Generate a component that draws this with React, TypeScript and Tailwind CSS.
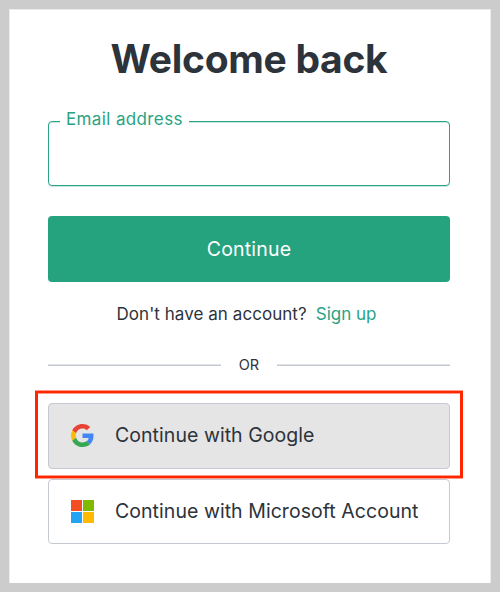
import { useState } from 'react';
import type { ReactNode } from 'react';

export default function App() {
  const [email, setEmail] = useState('');

  return (
    <div className="h-[592px] w-[500px] overflow-hidden bg-[#cccccc] p-[9px] font-['Inter',sans-serif] text-[#2d333a]">
      <main className="flex h-[574px] w-[482px] flex-col border-x border-t border-[#ececec] bg-white pt-[27px] pr-[40px] pl-[38px]">
        <h1 className="h-[44px] text-center text-[39px] leading-[44px] font-bold tracking-[-0.3px] whitespace-nowrap">
          Welcome back
        </h1>

        <div className="relative mt-[40px] h-[65px]">
          <input
            id="email"
            type="email"
            value={email}
            onChange={(e) => setEmail(e.target.value)}
            className="h-full w-full rounded-[4px] border border-[#29a383] px-4 text-lg shadow-[inset_0_1px_0_#c9e9df,0_1px_0_#c9e9df] outline-none"
          />
          <label
            htmlFor="email"
            className="absolute -top-[14px] left-[12px] bg-white pr-[6px] pl-[6px] text-[17px] leading-[24px] tracking-[0.37px] whitespace-nowrap text-[#29a383]"
          >
            Email address
          </label>
        </div>

        <button className="mt-[30px] h-[66px] shrink-0 rounded-[4px] bg-[#24a37e] pt-px text-[19.5px] tracking-[0.2px] text-white">
          Continue
        </button>

        <p className="mt-[20px] flex h-[24px] justify-center gap-[9px] pr-[5px] text-[17px] leading-[24px] whitespace-nowrap">
          <span className="tracking-[0.05px]">Don't have an account?</span>
          <a href="#" className="text-[#29a383]">
            Sign up
          </a>
        </p>

        <div className="mt-[29px] flex h-[20px] items-center">
          <span className="h-[2px] w-[173px] border-t border-[#dfe3e7] bg-[#c5c8d0]" />
          <span className="flex-1 text-center text-[14.5px] leading-[20px]">OR</span>
          <span className="h-[2px] w-[173px] border-t border-[#dfe3e7] bg-[#c5c8d0]" />
        </div>

        <div className="mt-[28px] flex flex-col gap-[10px]">
          <div className="relative">
            <ProviderButton label="Continue with Google" icon={<GoogleLogo />} highlighted />
            <span className="pointer-events-none absolute -inset-x-[13px] -top-[12px] -bottom-[9px] border-x-[3px] border-y-2 border-[#ff2600] shadow-[0_1px_0_#ff9a87,0_-1px_0_#ff9a87,inset_0_1px_0_#ff9a87,inset_0_-1px_0_#ff9a87]" />
          </div>
          <ProviderButton label="Continue with Microsoft Account" icon={<MicrosoftLogo />} />
        </div>
      </main>
    </div>
  );
}

function ProviderButton({ label, icon, highlighted }: { label: string; icon: ReactNode; highlighted?: boolean }) {
  return (
    <button
      className={`flex w-full items-center gap-[21px] rounded-[4px] border border-[#c5c9d0] pl-[22px] text-[19.5px] tracking-[0.05px] whitespace-nowrap ${
        highlighted ? 'h-[66px] bg-[#e5e5e5] pb-px' : 'h-[65px] bg-white'
      }`}
    >
      {icon}
      <span className="pt-px">{label}</span>
    </button>
  );
}

function GoogleLogo() {
  return (
    <svg width="23" height="23" viewBox="0 0 48 48">
      <path
        fill="#EA4335"
        d="M24 9.5c3.54 0 6.71 1.22 9.21 3.6l6.85-6.85C35.9 2.38 30.47 0 24 0 14.62 0 6.51 5.38 2.56 13.22l7.98 6.19C12.43 13.72 17.74 9.5 24 9.5z"
      />
      <path
        fill="#4285F4"
        d="M46.98 24.55c0-1.57-.15-3.09-.38-4.55H24v9.02h12.94c-.58 2.96-2.26 5.48-4.78 7.18l7.73 6c4.51-4.18 7.09-10.36 7.09-17.65z"
      />
      <path
        fill="#FBBC05"
        d="M10.53 28.59c-.48-1.45-.76-2.99-.76-4.59s.27-3.14.76-4.59l-7.98-6.19C.92 16.46 0 20.12 0 24c0 3.88.92 7.54 2.56 10.78l7.97-6.19z"
      />
      <path
        fill="#34A853"
        d="M24 48c6.48 0 11.93-2.13 15.89-5.81l-7.73-6c-2.15 1.45-4.92 2.3-8.16 2.3-6.26 0-11.57-4.22-13.47-9.91l-7.98 6.19C6.51 42.62 14.62 48 24 48z"
      />
    </svg>
  );
}

function MicrosoftLogo() {
  return (
    <svg width="23" height="23" viewBox="0 0 23 23">
      <path fill="#f25022" d="M0 0h11v11H0z" />
      <path fill="#7fba00" d="M12 0h11v11H12z" />
      <path fill="#23a4f2" d="M0 12h11v11H0z" />
      <path fill="#ffb900" d="M12 12h11v11H12z" />
    </svg>
  );
}
